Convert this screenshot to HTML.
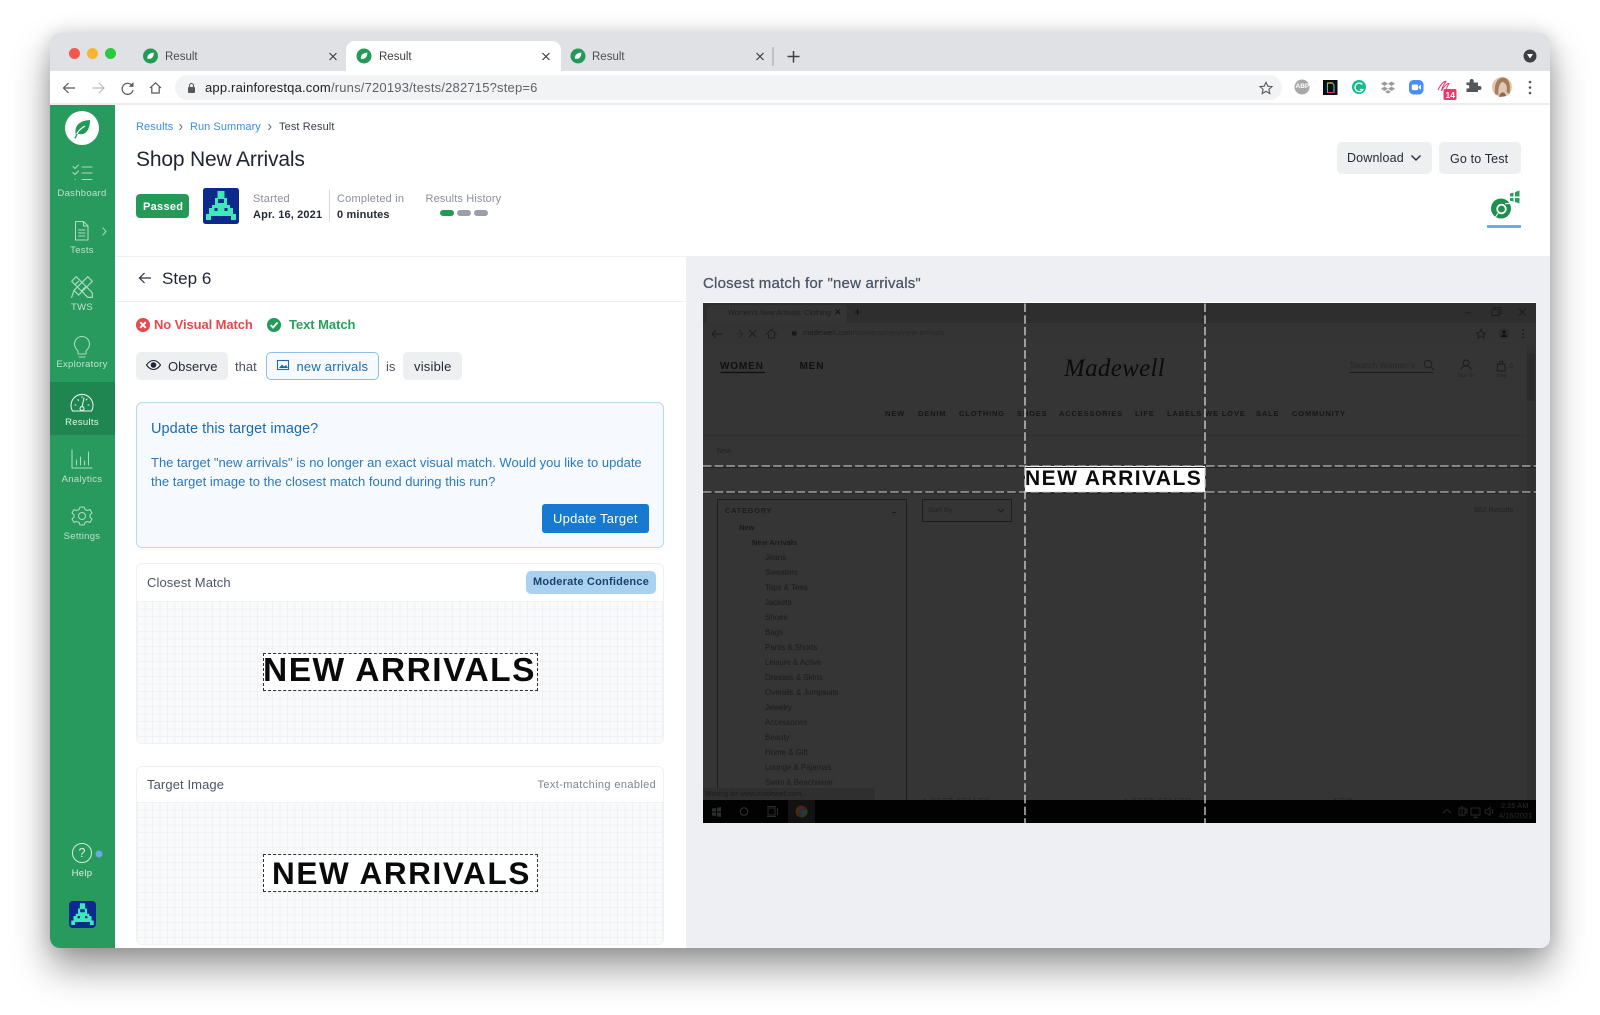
<!DOCTYPE html>
<html><head><meta charset="utf-8"><title>Result</title>
<style>
html,body{margin:0;padding:0;width:1600px;height:1015px;overflow:hidden;background:#fff;font-family:"Liberation Sans",sans-serif;color:#1f2533}
.a,.t{position:absolute}
.t{white-space:nowrap;line-height:1}
svg{position:absolute;overflow:visible}
.nl{color:#bfe0cd;font-size:9.5px;letter-spacing:.3px;width:64px;left:50px;text-align:center}
.lab{color:#8a909e;font-size:11px;letter-spacing:.2px}
.val{color:#232937;font-size:11px;font-weight:bold;letter-spacing:.15px}
.pill{position:absolute;background:#eeeff1;border-radius:5px}
.grid{position:absolute;background-color:#f9fafb;background-image:linear-gradient(#eff1f3 1px,transparent 1px),linear-gradient(90deg,#eff1f3 1px,transparent 1px);background-size:7.5px 7.5px}
.card{position:absolute;border:1px solid #f0f1f3;border-radius:6px;box-sizing:border-box;background:#fff}
.s{position:absolute;white-space:nowrap;line-height:1;color:#1b1b1b;font-size:8px}
.n{font-weight:bold;letter-spacing:.85px;color:#161616;top:410px;font-size:7.5px}
.c{left:765px;letter-spacing:-.08px;color:#1c1c1c}
.ico{fill:none;stroke:#aedac1;stroke-width:1.05;stroke-linecap:round;stroke-linejoin:round}
</style></head><body>

<!-- window -->
<div class="a" style="left:50px;top:33px;width:1500px;height:915px;border-radius:10px;background:#fff;box-shadow:0 20px 38px rgba(0,0,0,.4),0 0 18px rgba(0,0,0,.14)"></div>
<div class="a" style="left:50px;top:33px;width:1500px;height:38px;background:#dfe1e5;border-radius:10px 10px 0 0"></div>
<div class="a" style="left:50px;top:103px;width:1500px;height:2px;background:#ececee"></div>

<!-- traffic lights -->
<div class="a" style="left:68.500px;top:47.500px;width:11px;height:11px;border-radius:50%;background:#f2574f"></div>
<div class="a" style="left:86.500px;top:47.500px;width:11px;height:11px;border-radius:50%;background:#f5b52e"></div>
<div class="a" style="left:104.500px;top:47.500px;width:11px;height:11px;border-radius:50%;background:#2bc840"></div>

<!-- tabs -->
<div class="a" style="left:346px;top:41px;width:215px;height:30px;background:#fff;border-radius:9px 9px 0 0"></div>
<svg width="1600" height="1015" style="left:0;top:0">
 <defs>
  <g id="fav"><circle r="7.500" fill="#239a58"/><path d="M-3 3C-3.800-.8-1-3.200 3.400-3.400C3.400 .5 1.300 3.400-2.200 2.800Z" fill="#fff"/></g>
  <path id="x" d="M-3.500-3.500L3.500 3.500M3.500-3.500L-3.500 3.500" stroke="#3c4043" stroke-width="1.200" fill="none"/>
 </defs>
 <use href="#fav" x="150.500" y="56"/><use href="#fav" x="364" y="56"/><use href="#fav" x="578" y="56"/>
 <use href="#x" x="333" y="56.500"/><use href="#x" x="546" y="56.500"/><use href="#x" x="760" y="56.500"/>
 <path d="M773 47V66" stroke="#9ea1a6" stroke-width="1"/>
 <path d="M793.500 51V62.500M787.500 56.500H799.500" stroke="#3c4043" stroke-width="1.500"/>
 <circle cx="1530" cy="56" r="6.500" fill="#3c4043"/><path d="M1527 54H1533L1530 58.500Z" fill="#fff"/>
</svg>
<div class="t" style="left:165px;top:51.500px;font-size:11.500px;color:#4a4d52">Result</div>
<div class="t" style="left:379px;top:51.500px;font-size:11.500px;color:#3c4043">Result</div>
<div class="t" style="left:592px;top:51.500px;font-size:11.500px;color:#4a4d52">Result</div>

<!-- toolbar -->
<div class="a" style="left:175px;top:75px;width:1107px;height:25px;background:#f1f3f4;border-radius:13px"></div>
<svg width="1600" height="1015" style="left:0;top:0">
 <path d="M75 88H63.500M68.500 83L63.500 88L68.500 93" fill="none" stroke="#55585d" stroke-width="1.200"/>
 <path d="M92.500 88H104M99 83L104 88L99 93" fill="none" stroke="#b9bcc0" stroke-width="1.200"/>
 <path d="M132 85.500A5.500 5.500 0 1 0 133 90" fill="none" stroke="#55585d" stroke-width="1.200"/><path d="M133.500 82V86.800H128.700Z" fill="#55585d"/>
 <path d="M150 88L155.500 82.800L161 88M151.800 87V93H159.200V87" fill="none" stroke="#55585d" stroke-width="1.200"/>
 <rect x="188" y="87" width="7" height="6" rx="1" fill="#55585d"/><path d="M189.500 87V85.500A2 2 0 0 1 193.500 85.500V87" fill="none" stroke="#55585d" stroke-width="1.100"/>
 <path d="M1266 82.300L1267.800 86.200L1272 86.600L1268.900 89.400L1269.800 93.500L1266 91.400L1262.200 93.500L1263.100 89.400L1260 86.600L1264.200 86.200Z" fill="none" stroke="#55585d" stroke-width="1.100"/>
 <circle cx="1302" cy="87" r="7.500" fill="#a8a8a8"/>
 <rect x="1323" y="80" width="14.500" height="15" fill="#0b0b10"/><path d="M1327.500 83H1332.500L1334 85V92.500H1327.500Z" fill="none" stroke="#2ad0c8" stroke-width="1.100"/><path d="M1327.500 83H1332.500" stroke="#f0d020" stroke-width="1.200"/><path d="M1327.500 92.500H1334" stroke="#e8307a" stroke-width="1.200"/>
 <circle cx="1359" cy="87" r="7" fill="#13b98f"/><path d="M1362.500 84.500A4.300 4.300 0 1 0 1363 89.500H1359.800" fill="none" stroke="#fff" stroke-width="1.300"/>
 <path d="M1384.500 81.500L1388 83.800L1384.500 86L1381 83.800ZM1391.500 81.500L1395 83.800L1391.500 86L1388 83.800ZM1384.500 86.500L1388 88.800L1384.500 91L1381 88.800ZM1391.500 86.500L1395 88.800L1391.500 91L1388 88.800ZM1388 90L1391 92L1388 93.500L1385 92Z" fill="#9b9b9b"/>
 <rect x="1409" y="80" width="14.500" height="14.500" rx="4.500" fill="#4a8df5"/><rect x="1411.800" y="84.500" width="6.200" height="5.600" rx="1" fill="#fff"/><path d="M1418.600 86.500L1421 84.800V89.700L1418.600 88Z" fill="#fff"/>
 <path d="M1438 90C1441 84 1444 81 1446 81.500C1444 84 1442 88 1441.500 91C1444 86 1447 83 1449 83.500C1448 85 1446.500 88 1446 90" fill="none" stroke="#e9356f" stroke-width="1"/>
 <rect x="1443.500" y="89" width="13" height="11" rx="1.500" fill="#f4346a"/>
 <path d="M1467 85.500H1470.200V84A2 2 0 0 1 1474.200 84V85.500H1478.500V89H1480A2 2 0 0 1 1480 93H1478.500V95H1467V91.500H1468.800A2 2 0 0 0 1468.800 88H1467Z" fill="#53565b" transform="translate(-.5,-3)"/>
 <circle cx="1502" cy="87" r="10" fill="#e2c8b4"/><path d="M1495 94C1494 84 1497 78 1503 77.500C1509 78 1511 84 1509.500 94L1506.500 92C1508 86 1505 82 1502 82C1499 84 1498 89 1498.500 95Z" fill="#a67c58"/><path d="M1499 97C1500 91 1505 91 1506 96Z" fill="#8a6a54"/>
 <circle cx="1530" cy="82" r="1.300" fill="#55585c"/><circle cx="1530" cy="87.500" r="1.300" fill="#55585c"/><circle cx="1530" cy="93" r="1.300" fill="#55585c"/>
</svg>
<div class="t" style="left:205px;top:81px;font-size:13px;letter-spacing:.19px;color:#202124">app.rainforestqa.com<span style="color:#5f6368">/runs/720193/tests/282715?step=6</span></div>
<div class="t" style="left:1295.500px;top:84px;font-size:6.500px;font-weight:bold;color:#fff">ABP</div>
<div class="t" style="left:1445.500px;top:90.500px;font-size:8.500px;font-weight:bold;color:#fff">14</div>

<!-- sidebar -->
<div class="a" style="left:50px;top:105px;width:65px;height:843px;background:#289a5e;border-radius:0 0 0 10px"></div>
<div class="a" style="left:50px;top:382px;width:65px;height:53px;background:#1f8651"></div>
<svg width="1600" height="1015" style="left:0;top:0">
 <circle cx="82" cy="128" r="17" fill="#fff"/>
 <path d="M76 135.500C73.500 126.500 79 120.500 90 120C90 130 85.500 136 78 133.800Z" fill="#239a58"/><path d="M75.500 137C77 132 80.500 128.500 85 126" fill="none" stroke="#fff" stroke-width="1.200"/><path d="M75 138.500L77 134" stroke="#239a58" stroke-width="1.400"/>
 <g class="ico">
  <path d="M73 166.500L75 168.500L78.500 165M73 172.500L75 174.500L78.500 171M75 179.500H75.300M82 167H92M82 173H92M82 179.500H92"/>
  <path d="M75.500 221.500H83.500L88 226V240H75.500ZM83.500 221.500V226H88M78.500 230H85M78.500 233H85M78.500 236H85"/>
  <path d="M103 228L106 231.500L103 235" stroke="#a9d4bb"/>
  <g transform="translate(82,287) scale(1.150)"><path d="M-9-5L-5-9L9 5V9H5ZM5-9L9-5L-3 7L-7 3ZM-9 9L-7 3"/><path d="M-6-2L-3-5M3 0L0 3"/></g>
  <path d="M78 351C75.500 348.500 74.500 346 74.500 344A7.500 7.500 0 0 1 89.500 344C89.500 346 88.500 348.500 86 351V354H78ZM79 357H85"/>
  <path stroke="#e8f4ed" d="M72.500 411A11 11 0 1 1 91.500 411ZM82 407L84 398M75 405H76M88 405H89M78 399.500L78.500 400.500M87 399L86 400M82 396.500V397.500"/>
  <circle cx="82" cy="408.500" r="2" stroke="#e8f4ed"/>
  <path d="M72 450V468H92M76.500 465V460M80.500 465V457M84.500 465V461M88.500 465V452"/>
  <g transform="translate(82,516)"><circle r="3.500"/><path d="M-2-9H2L3-6.500L5.500-5.500L8-6.500L10-3L8-1.200V1.200L10 3L8 6.500L5.500 5.500L3 6.500L2 9H-2L-3 6.500L-5.500 5.500L-8 6.500L-10 3L-8 1.200V-1.200L-10-3L-8-6.500L-5.500-5.500L-3-6.500Z"/></g>
  <circle cx="82" cy="853" r="9.500" stroke="#d2e9dc"/>
 </g>
 <circle cx="99" cy="854" r="3.500" fill="#69abe3"/>
</svg>
<div class="t nl" style="top:188.500px">Dashboard</div>
<div class="t nl" style="top:245.500px">Tests</div>
<div class="t nl" style="top:302.500px">TWS</div>
<div class="t nl" style="top:359.500px">Exploratory</div>
<div class="t nl" style="top:417.500px;color:#e6f4ec">Results</div>
<div class="t nl" style="top:474.500px">Analytics</div>
<div class="t nl" style="top:531.500px">Settings</div>
<div class="t nl" style="top:868.500px;color:#dcefe4">Help</div>
<div class="t" style="left:78.500px;top:847px;font-size:12.500px;color:#dcefe4">?</div>
<svg width="27" height="27" viewBox="0 0 36 36" style="left:69px;top:901px">
 <rect width="36" height="36" rx="5" fill="#0b2a8c"/>
 <path fill="#3fe8b8" d="M14.500 3H21.500V10H24V17H27V20H30V26H33V32H28V28H8V32H3V26H6V20H9V17H12V10H14.500ZM15 11V15H21V11ZM11.500 20V23H14.500V20ZM21.500 20V23H24.500V20Z" fill-rule="evenodd"/>
</svg>

<!-- header -->
<div class="t" style="left:136px;top:121.500px;font-size:11px;letter-spacing:.1px;color:#3b8edb">Results</div>
<svg width="1600" height="1015" style="left:0;top:0"><path d="M179.500 124L182 127L179.500 130M268.500 124L271 127L268.500 130" fill="none" stroke="#6a7080" stroke-width="1"/></svg>
<div class="t" style="left:190px;top:121.500px;font-size:11px;letter-spacing:.05px;color:#3b8edb">Run Summary</div>
<div class="t" style="left:279px;top:121.500px;font-size:11px;letter-spacing:.1px;color:#3a404d">Test Result</div>
<div class="t" style="left:136px;top:148.500px;font-size:21px;letter-spacing:-.17px;color:#1f2533">Shop New Arrivals</div>

<div class="a" style="left:136px;top:194px;width:53px;height:24px;background:#239a58;border-radius:4px"></div>
<div class="t" style="left:143px;top:201.500px;font-size:11px;font-weight:bold;letter-spacing:.3px;color:#fff">Passed</div>
<svg width="36" height="36" viewBox="0 0 36 36" style="left:202.500px;top:188px">
 <rect width="36" height="36" rx="2.500" fill="#0b2a8c"/>
 <path fill="#3fe8b8" d="M14.500 3H21.500V10H24V17H27V20H30V26H33V32H28V28H8V32H3V26H6V20H9V17H12V10H14.500ZM15 11V15H21V11ZM11.500 20V23H14.500V20ZM21.500 20V23H24.500V20Z" fill-rule="evenodd"/>
</svg>
<div class="t lab" style="left:253px;top:193.500px">Started</div>
<div class="t val" style="left:253px;top:209.500px">Apr. 16, 2021</div>
<div class="a" style="left:328.500px;top:190px;width:1.500px;height:32px;background:#d8dadf"></div>
<div class="t lab" style="left:337px;top:193.500px">Completed in</div>
<div class="t val" style="left:337px;top:209.500px">0 minutes</div>
<div class="t lab" style="left:425.500px;top:193.500px;letter-spacing:.12px">Results History</div>
<div class="a" style="left:440px;top:210px;width:14px;height:6px;border-radius:3px;background:#239a58"></div>
<div class="a" style="left:457px;top:210px;width:13.500px;height:6px;border-radius:3px;background:#9a9fa9"></div>
<div class="a" style="left:474px;top:210px;width:13.500px;height:6px;border-radius:3px;background:#9a9fa9"></div>

<div class="pill" style="left:1337px;top:142px;width:95px;height:32px"></div>
<div class="t" style="left:1347px;top:151.500px;font-size:12.500px;color:#232937;letter-spacing:.15px">Download</div>
<svg width="1600" height="1015" style="left:0;top:0"><path d="M1411.500 155.500L1416 160L1420.500 155.500" fill="none" stroke="#232937" stroke-width="1.400"/></svg>
<div class="pill" style="left:1439px;top:142px;width:82px;height:32px"></div>
<div class="t" style="left:1450px;top:152.500px;font-size:12.500px;color:#232937;letter-spacing:.15px">Go to Test</div>
<svg width="1600" height="1015" style="left:0;top:0">
 <circle cx="1501" cy="208.500" r="10" fill="#1f8f4e"/>
 <circle cx="1501.500" cy="209" r="5.200" fill="#fff"/><circle cx="1501.500" cy="209" r="3.400" fill="#1f8f4e"/>
 <path d="M1505 203.800L1510.500 203.500M1498.500 212.500L1495.500 217" stroke="#fff" stroke-width="1"/>
 <path d="M1510 193.500L1513.500 192.500V196.500H1510ZM1515 192L1519.500 190.500V196.500H1515ZM1510 198H1513.500V201.500L1510 200.800ZM1515 198H1519.500V203.500L1515 202Z" fill="#26a05c"/>
</svg>
<div class="a" style="left:1487px;top:225px;width:34px;height:2.500px;background:#6aaee3"></div>

<div class="a" style="left:115px;top:256px;width:1435px;height:1px;background:#eef0f2"></div>

<!-- right panel bg -->
<div class="a" style="left:686px;top:256px;width:864px;height:692px;background:#edeff2;border-radius:0 0 10px 0"></div>

<!-- left panel -->
<svg width="1600" height="1015" style="left:0;top:0"><path d="M151 278H139.500M144.500 273L139.500 278L144.500 283" fill="none" stroke="#2a3040" stroke-width="1.200"/>
 <circle cx="143" cy="325" r="7" fill="#e5484d"/><path d="M140.200 322.200L145.800 327.800M145.800 322.200L140.200 327.800" stroke="#fff" stroke-width="2"/>
 <circle cx="274" cy="325" r="7" fill="#239a58"/><path d="M270.700 325L273 327.500L277.500 322.500" fill="none" stroke="#fff" stroke-width="1.800"/>
</svg>
<div class="t" style="left:162px;top:270px;font-size:17px;letter-spacing:.04px;color:#1f2533">Step 6</div>
<div class="a" style="left:115px;top:300.500px;width:571px;height:1px;background:#eef0f2"></div>
<div class="t" style="left:154px;top:318px;font-size:13px;font-weight:bold;color:#e5484d;letter-spacing:-.1px">No Visual Match</div>
<div class="t" style="left:289px;top:318px;font-size:13px;font-weight:bold;color:#27a05a;letter-spacing:-.05px">Text Match</div>

<div class="pill" style="left:136px;top:352px;width:92px;height:28px"></div>
<svg width="1600" height="1015" style="left:0;top:0">
 <path d="M146.500 365C149 361.500 151 360.500 153.500 360.500C156 360.500 158 361.500 160.500 365C158 368.500 156 369.500 153.500 369.500C151 369.500 149 368.500 146.500 365Z" fill="none" stroke="#1f2533" stroke-width="1.100"/><circle cx="153.500" cy="365" r="2.800" fill="#1f2533"/>
</svg>
<div class="t" style="left:168px;top:360px;font-size:13px;letter-spacing:.05px;color:#232937">Observe</div>
<div class="t" style="left:235px;top:360px;font-size:13px;color:#4a5060">that</div>
<div class="a" style="left:265.500px;top:352px;width:113px;height:28px;box-sizing:border-box;background:#f6fafe;border:1px solid #8cc0ea;border-radius:5px"></div>
<svg width="1600" height="1015" style="left:0;top:0"><rect x="277.500" y="360.500" width="11" height="9" fill="none" stroke="#1a6cb0" stroke-width="1.100"/><path d="M279 368L282 364.500L284 366.500L286 365L288 368Z" fill="#1a6cb0"/></svg>
<div class="t" style="left:296.500px;top:360px;font-size:13px;letter-spacing:.2px;color:#1a6cb0">new arrivals</div>
<div class="t" style="left:386px;top:360px;font-size:13px;color:#4a5060">is</div>
<div class="pill" style="left:403px;top:352px;width:59px;height:28px"></div>
<div class="t" style="left:414px;top:360px;font-size:13px;letter-spacing:.2px;color:#232937">visible</div>

<div class="a" style="left:136px;top:402px;width:528px;height:146px;box-sizing:border-box;background:#f6fafe;border:1px solid #b7daf4;border-radius:6px"></div>
<div class="t" style="left:151px;top:421.500px;font-size:14.500px;letter-spacing:.05px;color:#1a6cb0">Update this target image?</div>
<div class="t" style="left:151px;top:456px;font-size:13px;letter-spacing:.005px;color:#2a79bb">The target "new arrivals" is no longer an exact visual match. Would you like to update</div>
<div class="t" style="left:151px;top:474.500px;font-size:13px;letter-spacing:.03px;color:#2a79bb">the target image to the closest match found during this run?</div>
<div class="a" style="left:542px;top:504px;width:107px;height:29px;background:#1779cf;border-radius:3px"></div>
<div class="t" style="left:553px;top:512px;font-size:13px;letter-spacing:.25px;color:#fff">Update Target</div>

<!-- closest match -->
<div class="card" style="left:136px;top:563px;width:528px;height:181px"></div>
<div class="grid" style="left:137px;top:601px;width:526px;height:142px;border-radius:0 0 6px 6px"></div>
<div class="t" style="left:147px;top:575.500px;font-size:13px;letter-spacing:.1px;color:#4a5466">Closest Match</div>
<div class="a" style="left:526px;top:571px;width:130px;height:23px;background:#aad1f0;border-radius:5px"></div>
<div class="t" style="left:533px;top:577px;font-size:11px;font-weight:bold;letter-spacing:.22px;color:#17446f">Moderate Confidence</div>
<div class="a" style="left:263px;top:653px;width:275px;height:38px;box-sizing:border-box;background:#fff;border:1px dashed #333"></div>
<div class="t" style="left:263px;top:654px;font-size:33.500px;font-weight:bold;letter-spacing:1.500px;color:#0a0a0a">NEW ARRIVALS</div>

<!-- target -->
<div class="card" style="left:136px;top:766px;width:528px;height:179px"></div>
<div class="grid" style="left:137px;top:802px;width:526px;height:142px;border-radius:0 0 6px 6px"></div>
<div class="t" style="left:147px;top:778px;font-size:13px;letter-spacing:.1px;color:#4a5466">Target Image</div>
<div class="t" style="left:537.500px;top:780px;font-size:11px;letter-spacing:.38px;color:#7c8494">Text-matching enabled</div>
<div class="a" style="left:263px;top:854px;width:275px;height:38px;box-sizing:border-box;background:#fff;border:1px dashed #333"></div>
<div class="t" style="left:272px;top:857.500px;font-size:31.500px;font-weight:bold;letter-spacing:1.600px;color:#0a0a0a">NEW ARRIVALS</div>

<!-- right title -->
<div class="t" style="left:703px;top:275.500px;font-size:15px;letter-spacing:.2px;color:#4b5565;-webkit-text-stroke:.25px #4b5565">Closest match for "new arrivals"</div>

<!-- screenshot -->
<div class="a" style="left:703px;top:303px;width:833px;height:520px;background:#353535;box-shadow:0 -1px 0 #fff"></div>
<div class="a" style="left:703px;top:303px;width:833px;height:20px;background:#2e2e2e"></div>
<div class="a" style="left:707px;top:305px;width:140px;height:18px;background:#353535;border-radius:4px 4px 0 0"></div>
<div class="a" style="left:703px;top:323px;width:833px;height:22px;background:#343434"></div>
<div class="a" style="left:1527px;top:345px;width:8px;height:455px;background:#313131"></div>
<div class="a" style="left:1527px;top:354px;width:8px;height:47px;background:#2b2b2b"></div>
<div class="a" style="left:703px;top:435px;width:822px;height:1px;background:#303030"></div>

<div class="a" style="left:0;top:0;width:1600px;height:1015px;filter:blur(.35px)">
<div class="s" style="left:728px;top:309px;font-size:7.500px;color:#1f1f1f;letter-spacing:-.12px">Women's New Arrivals: Clothing</div>
<div class="s" style="left:834px;top:308px;font-size:9px;color:#111">✕</div>
<div class="s" style="left:854px;top:306px;font-size:12px;color:#111">+</div>
<div class="s" style="left:803px;top:329px;font-size:7.500px;color:#1d1d1d;letter-spacing:.15px">madewell.com<span style="color:#252525">/womens/new/new-arrivals</span></div>
<svg width="1600" height="1015" style="left:0;top:0">
 <g fill="none" stroke="#1c1c1c" stroke-width=".9">
  <path d="M723 334H712M716 330L712 334L716 338"/><path d="M735 334H743M739 330L743 334L739 338" stroke="#282828"/>
  <path d="M749 330L756 337M756 330L749 337"/><path d="M766 334.500L771.500 329.500L776.500 334.500M768.500 334V338H774.500V334"/>
  <path d="M1481 329.500L1482.500 332.500L1485.500 333L1483.300 335.200L1484 338L1481 336.500L1478 338L1478.700 335.200L1476.500 333L1479.500 332.500Z"/>
  <path d="M1465 312.800H1471M1492 309.500H1499V315.500H1492ZM1494 309.500V307.500H1501V313.500H1499M1519 308.500L1526 315.500M1526 308.500L1519 315.500"/>
  <path d="M1350 372.500H1433" stroke-width="1.100"/><circle cx="1428" cy="364" r="3.800"/><path d="M1431 367L1434 370"/>
  <circle cx="1466" cy="363" r="3"/><path d="M1461 370C1461 364.500 1471 364.500 1471 370"/>
  <path d="M1497.500 364H1504.500L1505.500 371H1497ZM1499.500 364V362.500A1.800 1.800 0 0 1 1503 362.500V364"/>
  <path d="M720.500 372.500H765" stroke="#0f0f0f" stroke-width="1.200"/>
 </g>
 <circle cx="1504" cy="333.500" r="5.500" fill="#2e2e2e"/><circle cx="1504" cy="332" r="1.800" fill="#111"/><path d="M1500.800 337C1501 333.800 1507 333.800 1507.200 337Z" fill="#111"/>
 <circle cx="1523" cy="330" r=".8" fill="#111"/><circle cx="1523" cy="333.700" r=".8" fill="#111"/><circle cx="1523" cy="337.400" r=".8" fill="#111"/>
 <rect x="792" y="331.500" width="4.500" height="4" fill="#181818"/>
</svg>
<div class="s" style="left:720px;top:361.500px;font-size:10px;font-weight:bold;letter-spacing:.85px;color:#111">WOMEN</div>
<div class="s" style="left:799.500px;top:361.500px;font-size:10px;font-weight:bold;letter-spacing:.85px;color:#111">MEN</div>
<div class="s" style="left:1064px;top:356px;font-family:'Liberation Serif',serif;font-style:italic;font-size:25px;letter-spacing:.3px;color:#0b0b0b">Madewell</div>
<div class="s" style="left:1350px;top:360.500px;font-size:8.500px;color:#272727;letter-spacing:.05px">Search Women's</div>
<div class="s" style="left:1457px;top:374px;font-size:5.500px;color:#242424">Sign In</div>
<div class="s" style="left:1497px;top:374px;font-size:5.500px;color:#242424">Bag</div>
<div class="s" style="left:1509.500px;top:364px;font-size:6px;color:#242424">0</div>
<div class="s n" style="left:885px">NEW</div>
<div class="s n" style="left:918px">DENIM</div>
<div class="s n" style="left:959px">CLOTHING</div>
<div class="s n" style="left:1017px">SHOES</div>
<div class="s n" style="left:1059px">ACCESSORIES</div>
<div class="s n" style="left:1135px">LIFE</div>
<div class="s n" style="left:1167px">LABELS WE LOVE</div>
<div class="s n" style="left:1256px">SALE</div>
<div class="s n" style="left:1292px">COMMUNITY</div>
<div class="s" style="left:717px;top:447.500px;font-size:7px;color:#222">New</div>

<div class="a" style="left:717px;top:499px;width:190px;height:310px;box-sizing:border-box;border:1px solid #1e1e1e;border-radius:1px"></div>
<div class="a" style="left:922px;top:499px;width:90px;height:23px;box-sizing:border-box;border:1px solid #1e1e1e"></div>
<div class="s" style="left:725px;top:506.500px;font-size:7.500px;font-weight:bold;letter-spacing:.7px;color:#1c1c1c">CATEGORY</div>
<div class="s" style="left:928px;top:506px;font-size:7.500px;color:#242424">Sort By</div>
<svg width="1600" height="1015" style="left:0;top:0"><path d="M998 509L1001 512L1004 509" fill="none" stroke="#1c1c1c"/><path d="M892 512.500H896" stroke="#1c1c1c"/></svg>
<div class="s" style="left:1474px;top:505.500px;font-size:7.500px;letter-spacing:-.05px;color:#222">682 Results</div>
<div class="s" style="left:739px;top:524px;font-weight:bold;color:#1a1a1a;font-size:7.500px">New</div>
<div class="s" style="left:752px;top:539px;font-weight:bold;color:#1a1a1a;font-size:7.500px;letter-spacing:0">New Arrivals</div>
<div class="s c" style="top:554px">Jeans</div>
<div class="s c" style="top:569px">Sweaters</div>
<div class="s c" style="top:584px">Tops &amp; Tees</div>
<div class="s c" style="top:599px">Jackets</div>
<div class="s c" style="top:614px">Shoes</div>
<div class="s c" style="top:629px">Bags</div>
<div class="s c" style="top:644px">Pants &amp; Shorts</div>
<div class="s c" style="top:659px">Leisure &amp; Active</div>
<div class="s c" style="top:674px">Dresses &amp; Skirts</div>
<div class="s c" style="top:689px">Overalls &amp; Jumpsuits</div>
<div class="s c" style="top:704px">Jewelry</div>
<div class="s c" style="top:719px">Accessories</div>
<div class="s c" style="top:734px">Beauty</div>
<div class="s c" style="top:749px">Home &amp; Gift</div>
<div class="s c" style="top:764px">Lounge &amp; Pajamas</div>
<div class="s c" style="top:779px">Swim &amp; Beachwear</div>
<div class="a" style="left:703px;top:788px;width:172px;height:12px;background:#2f2f2f"></div>
<div class="s" style="left:705px;top:790.500px;font-size:7px;color:#1d1d1d">Waiting for www.madewell.com...</div>
<div class="s" style="left:923px;top:797px;font-size:7.500px;letter-spacing:.9px;color:#222">♦ BEST SELLER</div>
<div class="s" style="left:1124px;top:797px;font-size:7.500px;letter-spacing:.9px;color:#222">♦ BEST SELLER</div>
<div class="s" style="left:1325px;top:797px;font-size:7.500px;letter-spacing:.9px;color:#222">+ NEW</div>

<!-- taskbar -->
<div class="a" style="left:703px;top:800px;width:833px;height:23px;background:#020203"></div>
<div class="a" style="left:788px;top:800px;width:27px;height:23px;background:#121212"></div>
<svg width="1600" height="1015" style="left:0;top:0">
 <path d="M712 808.500L716 808V811.500H712ZM717 807.800L721 807V811.500H717ZM712 812.500H716V816L712 815.500ZM717 812.500H721V817L717 816.200Z" fill="#2c2e30"/>
 <circle cx="744" cy="811.500" r="3.800" fill="none" stroke="#2e2e2e" stroke-width="1.100"/>
 <path d="M768 808H775V815H768ZM777.500 808V815M767 806.500H776M767 816.500H776" fill="none" stroke="#2a2a2a" stroke-width="1"/>
 <circle cx="801.500" cy="811.500" r="6" fill="#4e1f16"/><path d="M801.500 811.500L796.500 814.500A6 6 0 0 1 801.500 805.500Z" fill="#432c10"/><path d="M801.500 811.500L801.500 817.500A6 6 0 0 0 807 809Z" fill="#1f4220"/><circle cx="801.500" cy="811.500" r="2.500" fill="#1a334f"/>
 <path d="M1443 813L1447 809.500L1451 813" fill="none" stroke="#2a2a2a" stroke-width="1"/>
 <path d="M1459 808H1465V815H1459ZM1465 810L1467 809V813L1465 812ZM1462 806V816.500" fill="none" stroke="#262626"/>
 <path d="M1471 808H1480V815H1471ZM1475.500 815V817M1473 817.500H1478" fill="none" stroke="#262626"/>
 <path d="M1485 810H1487L1490 807.500V815.500L1487 813H1485ZM1492 809C1493 811 1493 812.500 1492 814" fill="none" stroke="#262626"/>
</svg>
<div class="s" style="left:1501px;top:801.500px;font-size:7.500px;color:#2a2a2a">2:25 AM</div>
<div class="s" style="left:1499px;top:812px;font-size:7.500px;color:#2a2a2a">4/16/2021</div>
</div>

<!-- highlight -->
<div class="a" style="left:1025px;top:466px;width:180px;height:26px;background:#fff"></div>
<div class="t" style="left:1025px;top:468px;font-size:21px;font-weight:bold;letter-spacing:1.450px;color:#0c0c0c">NEW ARRIVALS</div>
<svg width="1600" height="1015" style="left:0;top:0">
 <path d="M703 467.500H1536M703 493H1536" stroke="#222" stroke-width="1" fill="none"/>
 <g fill="none" stroke="#d6d6d6" stroke-dasharray="8.500 3.200">
  <path d="M703 466H1536M703 492H1536" stroke-width="1"/>
  <path d="M1025 303.500V823M1205 303.500V823" stroke-width="1.300"/>
 </g>
</svg>
</body></html>
